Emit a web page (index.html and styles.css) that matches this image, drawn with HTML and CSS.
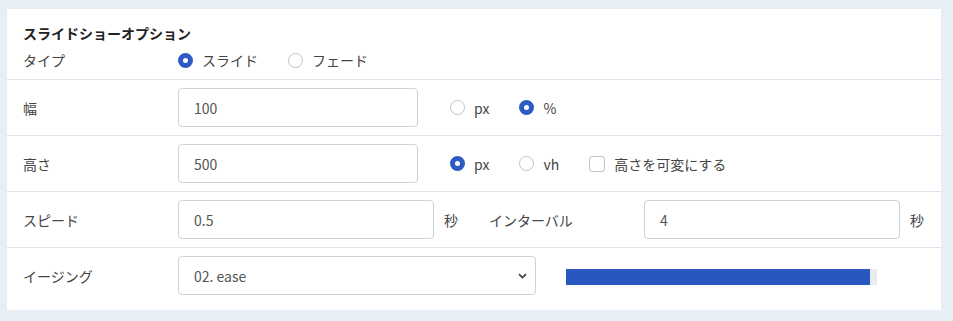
FILE: index.html
```html
<!DOCTYPE html>
<html lang="ja">

<head>
    <meta charset="UTF-8">
    <meta name="viewport" content="width=device-width, initial-scale=1.0">
    <title>スライドショーオプション</title>
    <link rel="stylesheet" href="styles.css">
</head>

<body>
    <div class="panel">
        <h3 class="panel-title">スライドショーオプション</h3>

        <div class="opt-row opt-type">
            <div class="opt-label">タイプ</div>
            <div class="opt-field">
                <label class="choice"><input type="radio" name="type" checked>スライド</label>
                <label class="choice"><input type="radio" name="type">フェード</label>
            </div>
        </div>

        <div class="opt-row">
            <div class="opt-label">幅</div>
            <div class="opt-field">
                <input type="text" class="textbox size-box" value="100">
                <label class="choice"><input type="radio" name="wunit">px</label>
                <label class="choice"><input type="radio" name="wunit" checked>%</label>
            </div>
        </div>

        <div class="opt-row">
            <div class="opt-label">高さ</div>
            <div class="opt-field">
                <input type="text" class="textbox size-box" value="500">
                <label class="choice"><input type="radio" name="hunit" checked>px</label>
                <label class="choice"><input type="radio" name="hunit">vh</label>
                <label class="choice"><input type="checkbox">高さを可変にする</label>
            </div>
        </div>

        <div class="opt-row speed-row">
            <div class="opt-label">スピード</div>
            <input type="text" class="textbox" value="0.5">
            <span class="unit">秒</span>
            <div class="opt-label">インターバル</div>
            <input type="text" class="textbox" value="4">
            <span class="unit">秒</span>
        </div>

        <div class="opt-row last-row">
            <div class="opt-label">イージング</div>
            <div class="opt-field">
                <div class="select-wrap">
                    <select class="textbox easing">
                        <option>02. ease</option>
                    </select>
                    <svg class="chevron" width="9" height="6" viewBox="0 0 9 6">
                        <path d="M1 1.2 L4.5 4.6 L8 1.2" fill="none" stroke="#444" stroke-width="1.8" />
                    </svg>
                </div>
                <div class="track">
                    <div class="bar" style="width: 97.7%"></div>
                </div>
            </div>
        </div>
    </div>
</body>

</html>
```

FILE: styles.css
```css
body {
    margin: 0;
    padding: 9px 12px 11px 7px;
    background-color: #e8eef5;
    font-family: "Noto Sans CJK JP", "Noto Sans", sans-serif;
    font-size: 14px;
    color: #444;
}

.panel {
    background-color: white;
    padding-top: 14px;
}

.panel-title {
    margin: 0;
    padding: 0 16px;
    font-size: 14px;
    line-height: 20px;
    font-weight: bold;
    color: #222;
}

.opt-row {
    display: flex;
    align-items: center;
    padding: 8px 16px;
    border-bottom: 1px solid #dfe3e7;
}

.opt-type {
    padding-top: 6px;
    line-height: 22px;
}

.last-row {
    border-bottom: none;
    padding-bottom: 15px;
}

.opt-label {
    width: 155px;
    flex-shrink: 0;
}

.opt-field {
    display: flex;
    align-items: center;
}

.choice {
    display: flex;
    align-items: center;
    margin-right: 30px;
}

.choice input {
    appearance: none;
    width: 15px;
    height: 15px;
    margin: 0 9px 0 0;
    border: 1px solid #bfc3c7;
    border-radius: 50%;
    background-color: white;
}

.choice input:checked {
    border: 5px solid #2d5bc3;
    background-color: white;
}

.choice input[type="checkbox"] {
    border-radius: 3px;
    width: 16px;
    height: 16px;
}

.textbox {
    box-sizing: border-box;
    height: 39px;
    padding: 0 15px;
    border: 1px solid #ced2d6;
    border-radius: 4px;
    font-family: inherit;
    font-size: 14px;
    color: #555;
    background-color: white;
}

.size-box {
    width: 240px;
    margin-right: 32px;
}

.speed-row .textbox {
    width: 256px;
}

.unit {
    margin: 0 31px 0 10px;
}

.speed-row .unit:last-child {
    margin-right: 0;
}

.select-wrap {
    position: relative;
}

.easing {
    appearance: none;
    width: 358px;
}

.chevron {
    position: absolute;
    right: 9px;
    top: 17px;
}

.track {
    width: 311px;
    height: 16px;
    margin: 3px 0 0 30px;
    background-color: #e9ecef;
}

.bar {
    height: 100%;
    background-color: #2a56c0;
}
```
